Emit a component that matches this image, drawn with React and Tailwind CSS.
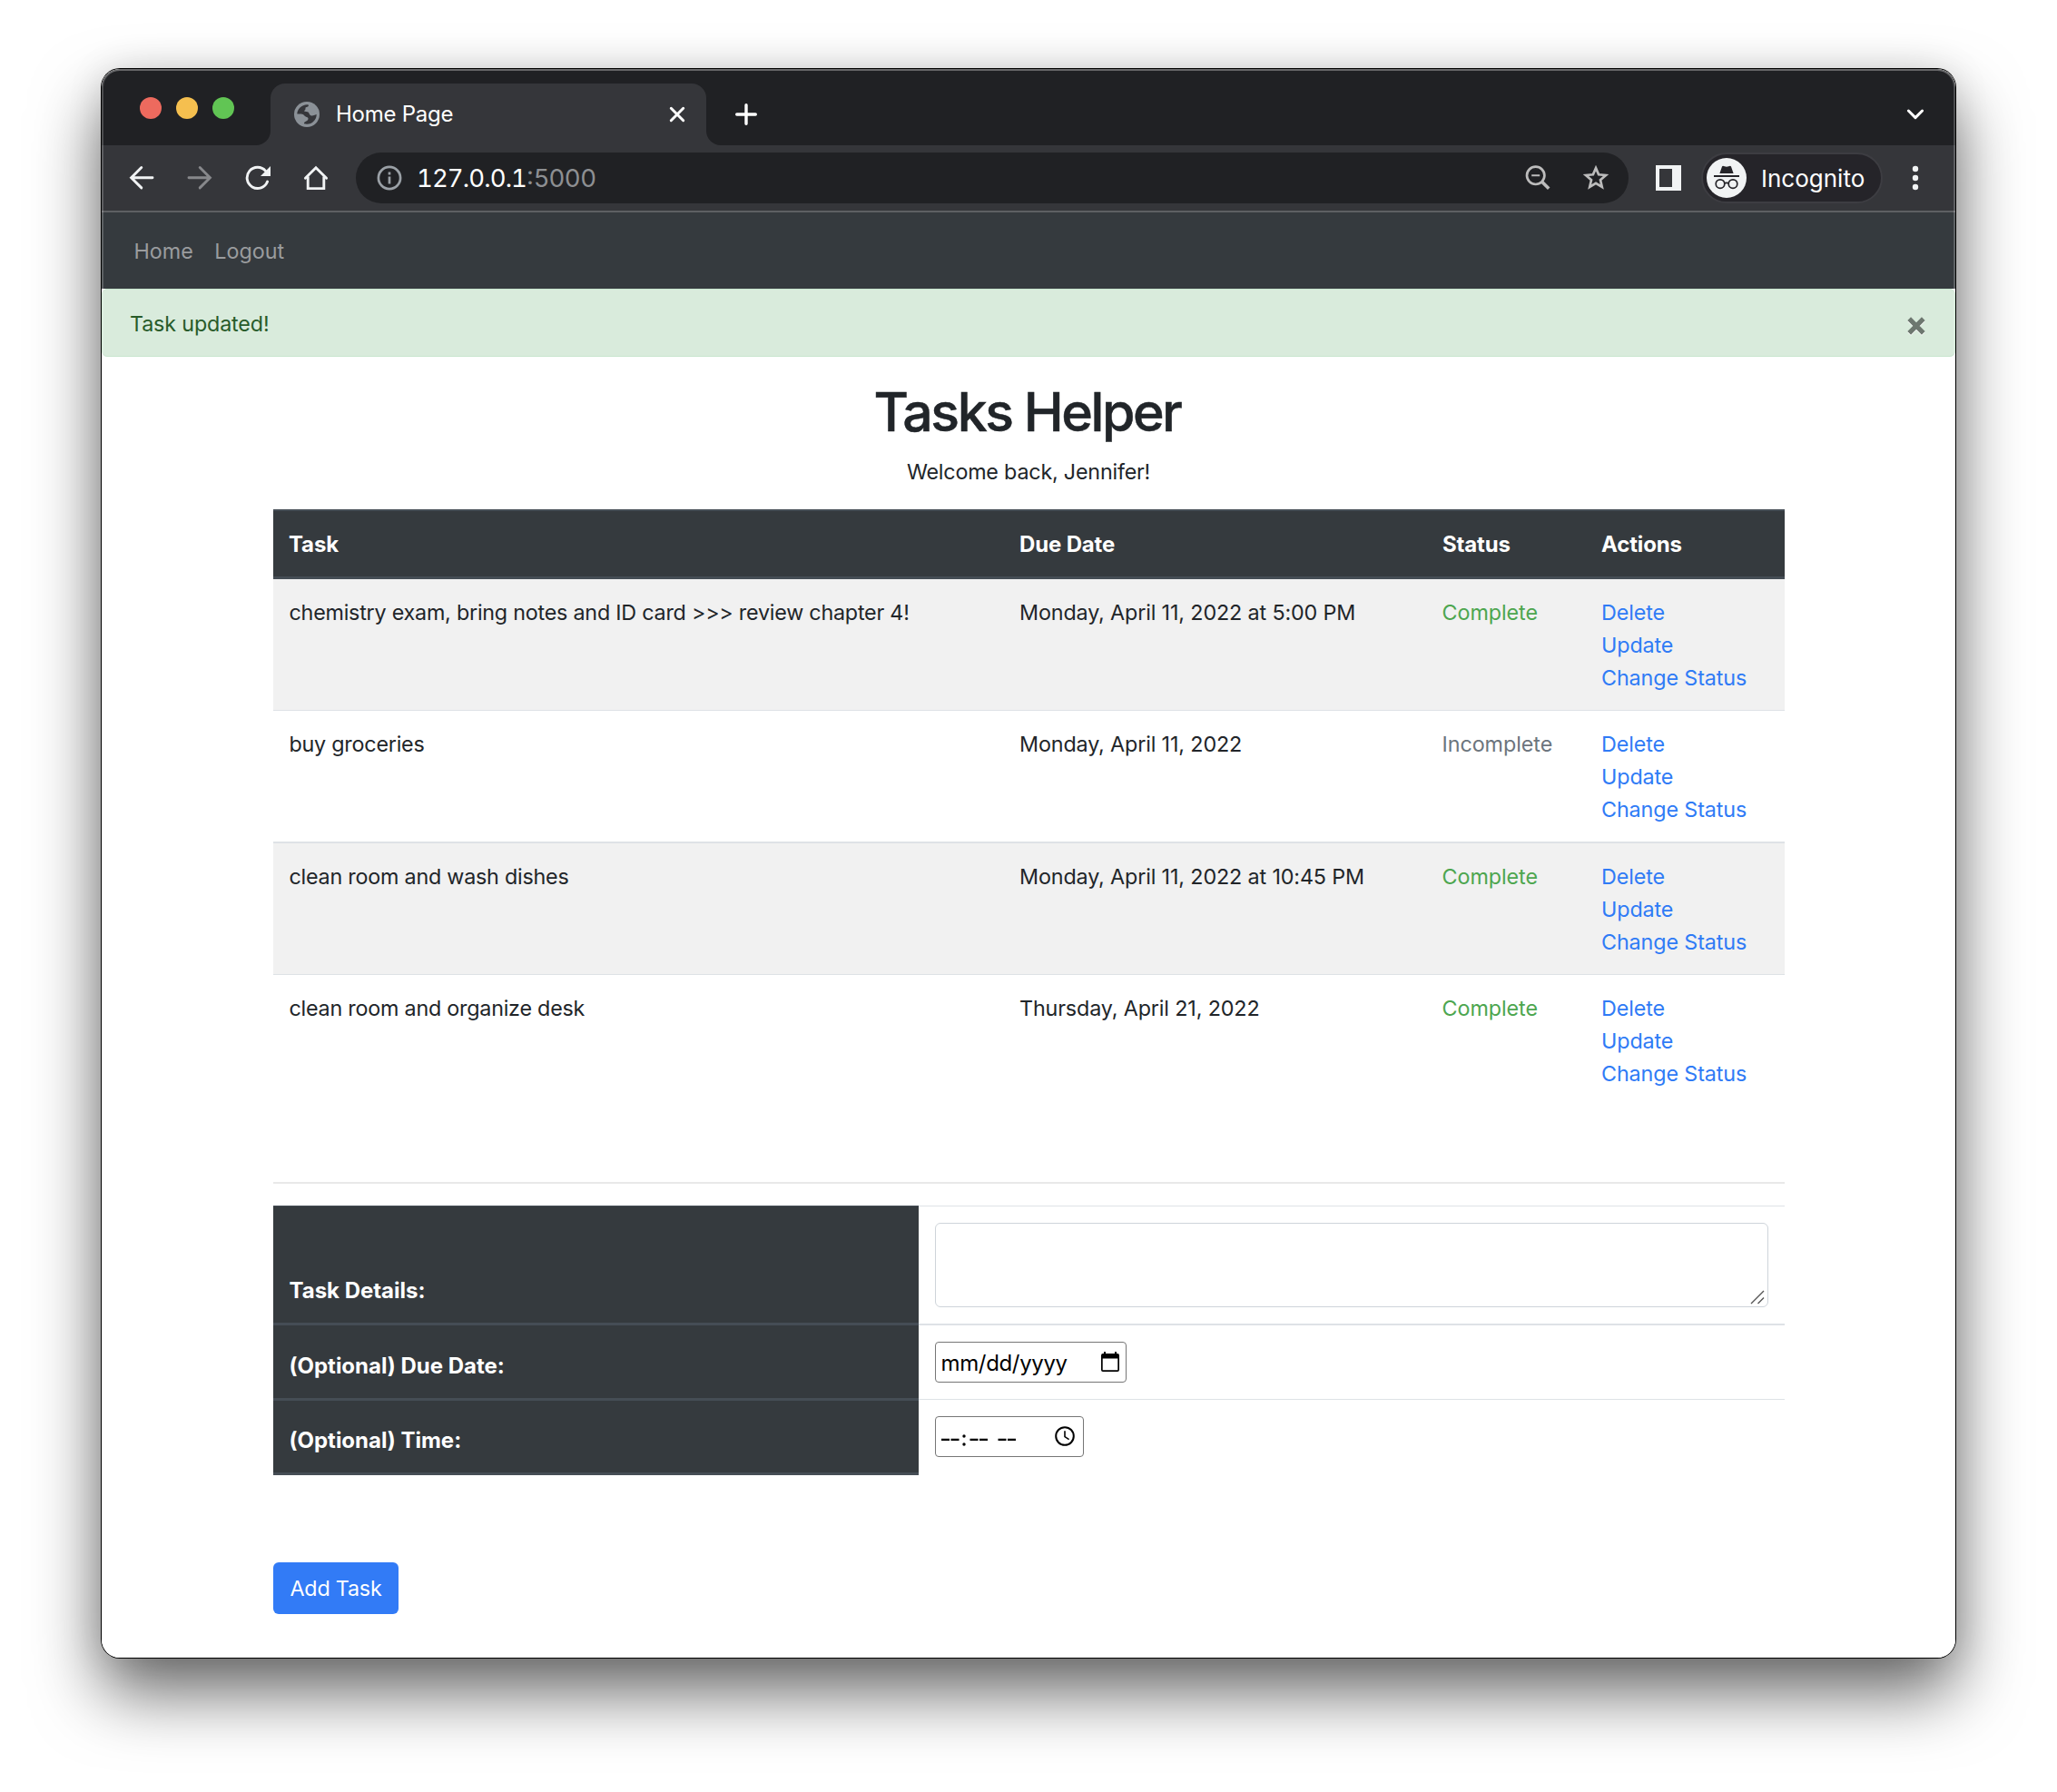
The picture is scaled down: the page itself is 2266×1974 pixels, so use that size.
import React from "react";

const tasks = [
  { title: "chemistry exam, bring notes and ID card >>> review chapter 4!", due: "Monday, April 11, 2022 at 5:00 PM", done: true, row: "bg-[#f1f1f1]" },
  { title: "buy groceries", due: "Monday, April 11, 2022", done: false, row: "border-t bg-white" },
  { title: "clean room and wash dishes", due: "Monday, April 11, 2022 at 10:45 PM", done: true, row: "border-t-2 bg-[#f1f1f1]" },
  { title: "clean room and organize desk", due: "Thursday, April 21, 2022", done: true, row: "border-t bg-white" },
];

const columns = "grid grid-cols-[805px_466px_175px_219px]";

function IconButton({ color = "text-[#f1f3f4]", className = "", children }) {
  return (
    <svg viewBox="0 0 28 28" className={`size-7 shrink-0 ${color} ${className}`} fill="none" stroke="currentColor" strokeWidth="2.9" strokeLinecap="round">
      {children}
    </svg>
  );
}

function TabStrip() {
  return (
    <div className="flex h-[84px] items-end bg-[#202124] pl-[42px] pr-[34px] text-white">
      <div className="mb-[29px] flex gap-4">
        <span className="size-6 rounded-full bg-[#ed6a5e]" />
        <span className="size-6 rounded-full bg-[#f5bf4f]" />
        <span className="size-6 rounded-full bg-[#61c554]" />
      </div>
      <svg viewBox="0 0 16 16" className="ml-6 size-4 text-[#35363a]" fill="currentColor">
        <path d="M16 0V16H0A16 16 0 0 0 16 0Z" />
      </svg>
      <div className="flex h-[68px] w-[480px] items-center rounded-t-2xl bg-[#35363a] pl-[26px] pr-5">
        <svg viewBox="0 0 28 28" className="size-7">
          <circle cx="14" cy="14" r="14" fill="#8b9197" />
          <path fill="#35363a" d="M3.3 13.5C3.5 8 8 3.6 14.5 3.2C17 3.2 16 5.6 13.6 6C11.4 6.6 13.6 8 11.6 9.6C10 10.8 12.5 11 14.6 11.2C17.4 12 16 14.5 19 15.4C21 16 22 14.6 24.7 14C24.7 20 20 24.7 14 24.8L11 24.2C10.5 21.8 15 21.8 15.5 19C16 16.5 12.5 17.5 11 15C10 13.3 6 13.8 3.3 13.5Z" />
        </svg>
        <span className="ml-[18px] text-[24px] tracking-[-0.25px]">Home Page</span>
        <svg viewBox="0 0 24 24" className="ml-auto size-6" stroke="white" strokeWidth="3" strokeLinecap="round">
          <path d="M5.3 5.3L18.7 18.7M18.7 5.3L5.3 18.7" />
        </svg>
      </div>
      <svg viewBox="0 0 16 16" className="size-4 text-[#35363a]" fill="currentColor">
        <path d="M0 0V16H16A16 16 0 0 1 0 0Z" />
      </svg>
      <svg viewBox="0 0 24 24" className="mb-[22px] ml-4 size-6" stroke="white" strokeWidth="3.4" strokeLinecap="round">
        <path d="M12 1.7V22.3M1.7 12H22.3" />
      </svg>
      <svg viewBox="0 0 20 14" className="mb-[27px] ml-auto h-[14px] w-5" fill="none" stroke="white" strokeWidth="3" strokeLinecap="round" strokeLinejoin="round">
        <path d="M2.4 3L10 10.6L17.6 3" />
      </svg>
    </div>
  );
}

function Toolbar() {
  return (
    <div className="flex h-[74px] items-center border-b-2 border-[#5e6063] bg-[#35363a] pl-[30px] pr-[30px]">
      <IconButton>
        <path d="M26 13.7H3M13.8 2.5L2.6 13.7L13.8 24.9" />
      </IconButton>
      <IconButton color="text-[#87888b]" className="ml-9">
        <path d="M2 13.7H25M14.2 2.5L25.4 13.7L14.2 24.9" />
      </IconButton>
      <IconButton className="ml-9">
        <path d="M24.6 18A11.6 11.6 0 1 1 22.6 6.4" />
        <path d="M28 1V12H17Z" fill="currentColor" stroke="none" />
      </IconButton>
      <IconButton className="ml-9">
        <path d="M5.2 12.5V25.6H22.8V12.5" strokeLinecap="butt" />
        <path d="M2.4 14.2L14 2.8L25.6 14.2" strokeLinecap="round" />
      </IconButton>

      <div className="ml-[30px] flex h-14 w-[1402px] items-center rounded-full bg-[#202124] pl-[22.5px] pr-[21px]">
        <svg viewBox="0 0 28 28" className="size-7 text-[#9aa0a6]" fill="none" stroke="currentColor" strokeWidth="2.7">
          <circle cx="14" cy="14" r="12.1" />
          <path d="M14 12.6V20.6M14 7.6V10.6" />
        </svg>
        <span className="ml-[16.5px] pt-0.5 text-[27.5px] text-white">
          <span className="tabular-nums tracking-[-0.9px]">127.0.0.1</span>
          <span className="text-[#8d8f92]">:5000</span>
        </span>
        <svg viewBox="0 0 28 28" className="ml-auto size-7 text-[#bcbcbc]" fill="none" stroke="currentColor" strokeWidth="2.7">
          <circle cx="11.7" cy="11.3" r="9.7" />
          <path d="M18.4 18L26.2 25.8" strokeWidth="3.6" />
          <path d="M7.2 11.3H16.2" strokeWidth="2" />
        </svg>
        <svg viewBox="0 0 30 30" className="ml-[35px] size-[30px] text-[#bcbcbc]" fill="none" stroke="currentColor" strokeWidth="2.7">
          <path d="M15 4.1L18.1 11.3L26 12L20 17.2L21.8 24.9L15 20.8L8.2 24.9L10 17.2L4 12L11.9 11.3Z" />
        </svg>
      </div>

      <svg viewBox="0 0 28 28" className="ml-[30px] size-7" fill="#f1f3f4">
        <path fillRule="evenodd" d="M0 0H28V28H0ZM4 4V24H18V4Z" />
      </svg>
      <div className="ml-[22px] flex h-14 w-[200px] items-center rounded-full border-2 border-[#3d3d42] bg-[#252429] pl-1">
        <svg viewBox="0 0 44 44" className="size-11 shrink-0" fill="none" stroke="#252429" strokeWidth="1.7">
          <circle cx="22" cy="22" r="22" fill="#f1f3f4" stroke="none" />
          <path d="M14.4 17L17 9.6Q17.5 8.4 18.8 8.9L22 9.8L25.2 8.9Q26.5 8.4 27 9.6L29.6 17Z" fill="#252429" stroke="none" />
          <path d="M8 20H36" strokeWidth="2" />
          <circle cx="15" cy="28.6" r="4.8" />
          <circle cx="29" cy="28.6" r="4.8" />
          <path d="M19.6 28Q22 26.6 24.4 28" />
        </svg>
        <span className="ml-4 text-[26px] text-white">Incognito</span>
      </div>
      <svg viewBox="0 0 8 28" className="ml-8 h-7 w-2" fill="#f1f3f4">
        <circle cx="4" cy="4" r="3.2" />
        <circle cx="4" cy="14" r="3.2" />
        <circle cx="4" cy="24" r="3.2" />
      </svg>
    </div>
  );
}

function Heading({ children }) {
  return <div className="pl-[17.5px] pt-[19px]">{children}</div>;
}

function TaskTable() {
  return (
    <div className="mt-[23px] leading-9">
      <div className={`${columns} h-[77px] border-b-[3px] border-t-2 border-[#454d55] bg-[#353a3e] text-[24px] font-bold tracking-[-0.15px] text-white`}>
        <Heading>Task</Heading>
        <Heading>Due Date</Heading>
        <Heading>Status</Heading>
        <Heading>Actions</Heading>
      </div>
      {tasks.map((task) => (
        <div key={task.title} className={`${columns} border-[#dee2e6] ${task.row}`}>
          <div className="pl-[18px] pt-[19px] tracking-[-0.22px]">{task.title}</div>
          <div className="pl-[17.5px] pt-[19px] tracking-[-0.13px]">{task.due}</div>
          <div className={task.done ? "pl-[17px] pt-[19px] tracking-[-0.05px] text-[#4da64f]" : "pl-[17px] pt-[19px] tracking-[-0.05px] text-[#6c757d]"}>
            {task.done ? "Complete" : "Incomplete"}
          </div>
          <div className="flex flex-col pb-[17px] pl-[17.5px] pt-[19px] tracking-[-0.1px] text-[#2f7bf6]">
            <a>Delete</a>
            <a>Update</a>
            <a>Change Status</a>
          </div>
        </div>
      ))}
    </div>
  );
}

function TaskForm() {
  const label = "flex items-end border-b-[3px] border-[#454d55] bg-[#353a3e] pl-[18px] text-[24px] font-bold leading-9 tracking-[-0.02px] text-white";
  return (
    <>
      <div className="mt-6 grid grid-cols-[711px_954px]">
        <div className={`${label} h-[132px] border-t pb-[17px]`}>Task Details:</div>
        <div className="h-[132px] border-b-2 border-t border-[#dee2e6] px-[18px] pt-[18px]">
          <div className="flex h-[93px] items-end justify-end rounded-md border border-[#ced4da] bg-white p-[3px] pb-[2px]">
            <svg viewBox="0 0 16 16" className="size-4" stroke="#555" strokeWidth="1.4">
              <path d="M1 15L15 1M8.5 15L15 8.5" />
            </svg>
          </div>
        </div>
        <div className={`${label} h-[83px] pb-[17px]`}>(Optional) Due Date:</div>
        <div className="h-[82px] border-b border-[#dee2e6] pl-[18px] pt-[18px] text-black">
          <div className="flex h-[45px] w-[211px] items-center justify-between rounded border border-[#767676] pl-[6px] pr-[7px] text-[24px]">
            <span className="pt-0.5 tracking-[-0.35px]">mm/dd/yyyy</span>
            <svg viewBox="0 0 20 22" className="-mt-0.5 h-[22px] w-5">
              <path fillRule="evenodd" d="M2 2H3V0H5V2H15V0H17V2H18Q20 2 20 4V20Q20 22 18 22H2Q0 22 0 20V4Q0 2 2 2ZM1.7 7.5V20.3H18.3V7.5Z" />
            </svg>
          </div>
        </div>
        <div className={`${label} h-[82px] pb-[17px]`}>(Optional) Time:</div>
        <div className="pl-[18px] pt-[17px] text-black">
          <div className="flex h-[45px] w-[164px] items-center justify-between rounded border border-[#767676] pl-[6px] pr-[8.5px] text-[24px]">
            <svg viewBox="0 0 84 16" className="mt-1.5 h-4 w-[84px]">
              <path d="M0 7.8H9M10.5 7.8H19.5M31.5 7.8H40.5M42 7.8H51M62.5 7.8H71.5M73 7.8H82" stroke="black" strokeWidth="2.2" />
              <circle cx="25" cy="4" r="1.7" />
              <circle cx="25" cy="13" r="1.7" />
            </svg>
            <svg viewBox="0 0 22 22" className="-mt-0.5 size-[22px]" fill="none" stroke="black" strokeWidth="2">
              <circle cx="11" cy="11" r="9.8" />
              <path d="M11 5.2V11.6L15.6 14.6" strokeWidth="1.6" />
            </svg>
          </div>
        </div>
      </div>
      <button className="mt-24 block h-[57px] w-[138px] rounded-md bg-[#327bf6] pl-px pt-0.5 tracking-[-0.2px] text-white">Add Task</button>
    </>
  );
}

export default function App() {
  return (
    <div className="h-[1974px] w-[2266px] overflow-hidden bg-white pl-28 pt-[76px] font-['Inter',sans-serif]">
      <div className="relative h-[1750px] w-[2042px] rounded-[20px] shadow-[0_0_0_1px_#000,0_38px_74px_rgba(0,0,0,0.6),0_0_40px_rgba(0,0,0,0.1)]">
        <div className="h-full overflow-hidden rounded-[20px] bg-white text-[23.3px] text-[#212529]">
          <TabStrip />
          <Toolbar />
          <nav className="flex h-[84px] items-center gap-[23.5px] bg-[#353a3e] pl-[35.5px] pt-0.5 text-[#9a9c9e]">
            <a>Home</a>
            <a>Logout</a>
          </nav>
          <div className="flex h-[75px] items-center justify-between rounded-md border border-[#c8e5ce] bg-[#d9ebdc] pl-[30px] pr-[31px] text-[#285b2a]">
            <span className="pt-[3px] tracking-[-0.15px]">Task updated!</span>
            <svg viewBox="0 0 22 22" className="mt-[6px] size-[22px] drop-shadow-[0_1.5px_0_#fff]" stroke="#6d776f" strokeWidth="5.2">
              <path d="M3.2 3.2L18.8 18.8M18.8 3.2L3.2 18.8" />
            </svg>
          </div>
          <main className="mx-auto w-[1665px] pt-[25px]">
            <h1 className="-ml-[3px] text-center text-[59px] font-medium leading-[72px] tracking-[-2.45px] [-webkit-text-stroke:0.5px_#212529]">Tasks Helper</h1>
            <p className="mt-3 text-center leading-9 tracking-[-0.2px]">Welcome back, Jennifer!</p>
            <TaskTable />
            <hr className="mt-[84px] border-t-2 border-[#e9e9e9]" />
            <TaskForm />
          </main>
        </div>
        <div className="pointer-events-none absolute inset-0 rounded-[20px] shadow-[inset_0_0_0_2px_rgba(255,255,255,0.2),inset_0_2px_0_rgba(255,255,255,0.15)]" />
      </div>
    </div>
  );
}
